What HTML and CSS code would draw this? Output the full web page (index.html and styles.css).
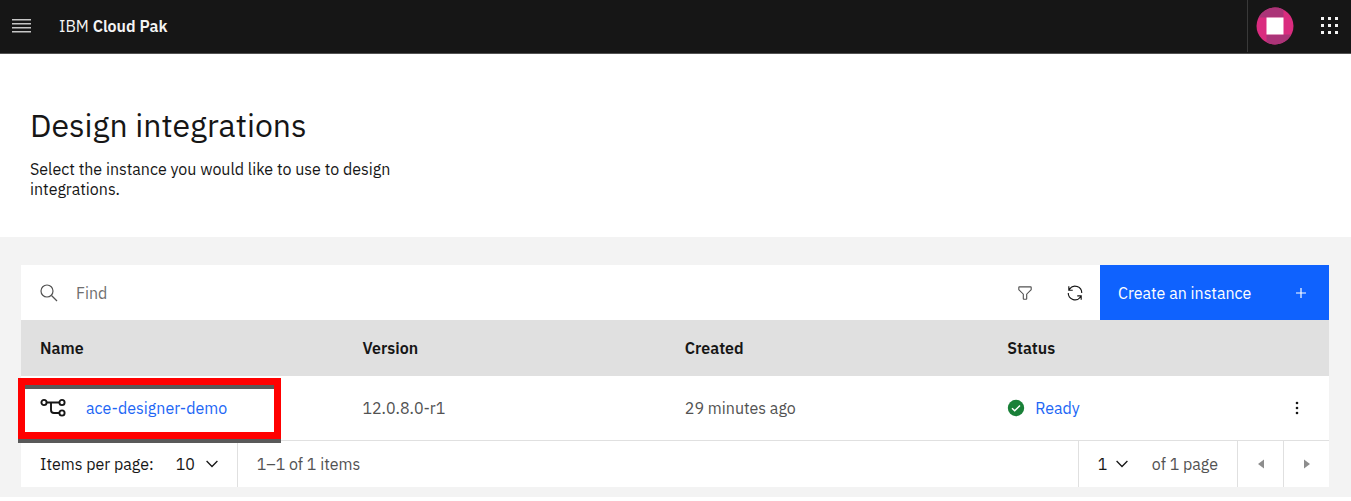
FILE: index.html
```html
<!DOCTYPE html>
<html lang="en">
<head>
<meta charset="utf-8">
<meta name="viewport" content="width=device-width, initial-scale=1">
<title>IBM Cloud Pak</title>
<link rel="stylesheet" href="styles.css">
</head>
<body>
<header class="topbar">
  <button class="icon-button menu-button" type="button" aria-label="Open menu">
    <svg width="20" height="16" viewBox="0 0 20 16" fill="#c6c6c6"><path d="M1 1h19v1H1zM1 5h19v1H1zM1 9h19v1H1zM1 13h19v1H1z"/><path d="M1 2h19v1H1zM1 6h19v1H1zM1 10h19v1H1zM1 14h19v1H1z" opacity=".5"/></svg>
  </button>
  <a class="brand" href="#">IBM <strong>Cloud Pak</strong></a>
  <div class="topbar-actions">
    <button class="icon-button avatar" type="button" aria-label="Profile">
      <svg width="38" height="38" viewBox="0 0 38 38">
        <defs><clipPath id="disc"><circle cx="19" cy="19" r="18.5"/></clipPath></defs>
        <g clip-path="url(#disc)">
          <path fill="#da2c7f" d="M0 0h38v38H0z"/>
          <path fill="#ab3478" d="M0 0h27.500v10.500H0zM10.500 27.500H38V38H10.500z"/>
          <path fill="#fff" d="M10.500 10.500h17v17h-17z"/>
        </g>
      </svg>
    </button>
    <button class="icon-button switcher" type="button" aria-label="App switcher">
      <svg width="20" height="20" viewBox="0 0 20 20" fill="#f4f4f4"><path d="M1 1h3v3H1zM8 1h3v3H8zM15 1h3v3h-3zM1 8h3v3H1zM8 8h3v3H8zM15 8h3v3h-3zM1 15h3v3H1zM8 15h3v3H8zM15 15h3v3h-3z"/></svg>
    </button>
  </div>
</header>

<section class="intro">
  <h1 class="title">Design integrations</h1>
  <p class="lead">Select the instance you would like to use to design integrations.</p>
</section>

<main class="content">
  <div class="toolbar">
    <label class="search">
      <svg width="18" height="18" viewBox="0 0 18 18" fill="none" stroke="#525252" stroke-width="1.200"><circle cx="7" cy="7" r="6"/><path d="M11.500 11.500l5.500 5.500"/></svg>
      <input class="search-input" type="search" placeholder="Find" aria-label="Find">
    </label>
    <button class="icon-button tool" type="button" aria-label="Filter">
      <svg width="18" height="18" viewBox="0 0 32 32" fill="#525252"><path d="M18 28h-4a2 2 0 0 1-2-2v-7.590L4.590 11A2 2 0 0 1 4 9.590V6a2 2 0 0 1 2-2h20a2 2 0 0 1 2 2v3.590a2 2 0 0 1-.590 1.410L20 18.410V26a2 2 0 0 1-2 2zM6 6v3.590l8 8V26h4v-8.410l8-8V6z"/></svg>
    </button>
    <button class="icon-button tool" type="button" aria-label="Refresh">
      <svg width="18" height="18" viewBox="0 0 32 32" fill="#161616"><path d="M12 10H6.780A11 11 0 0 1 27 16h2A13 13 0 0 0 6 7.680V4H4v8h8zM20 22h5.220A11 11 0 0 1 5 16H3a13 13 0 0 0 23 8.320V28h2v-8h-8z"/></svg>
    </button>
    <button class="create" type="button">Create an instance
      <svg width="12" height="12" viewBox="0 0 12 12" fill="none" stroke="#fff" stroke-width="1.200"><path d="M6 1v10M1 6h10"/></svg>
    </button>
  </div>

  <table class="instances">
    <colgroup><col class="col-main"><col class="col-main"><col class="col-main"><col><col class="col-menu"></colgroup>
    <thead>
      <tr><th scope="col">Name</th><th scope="col">Version</th><th scope="col">Created</th><th scope="col">Status</th><th aria-label="Actions"></th></tr>
    </thead>
    <tbody>
      <tr>
        <td class="name-cell">
          <div class="inline">
            <svg width="26" height="20" viewBox="0 0 26 20" fill="none" stroke="#161616" stroke-width="1.900"><circle cx="4" cy="4.500" r="2.600"/><circle cx="22" cy="4.500" r="2.600"/><circle cx="22" cy="15" r="2.600"/><path d="M7 4.500h12M11 4.500v7.500a3 3 0 0 0 3 3h5"/></svg>
            <a class="link" href="#">ace-designer-demo</a>
          </div>
          <span class="highlight"></span>
        </td>
        <td>12.0.8.0-r1</td>
        <td>29 minutes ago</td>
        <td>
          <div class="inline status">
            <svg width="18" height="18" viewBox="0 0 18 18"><circle cx="9" cy="9" r="8.200" fill="#198038"/><path d="M5 9.200l2.700 2.600L13 6.500" fill="none" stroke="#fff" stroke-width="1.500"/></svg>
            <a class="link" href="#">Ready</a>
          </div>
        </td>
        <td class="menu-cell">
          <button class="icon-button" type="button" aria-label="More actions">
            <svg width="4" height="14" viewBox="0 0 4 14" fill="#161616"><circle cx="2" cy="2" r="1.300"/><circle cx="2" cy="7" r="1.300"/><circle cx="2" cy="12" r="1.300"/></svg>
          </button>
        </td>
      </tr>
    </tbody>
  </table>

  <nav class="pagination" aria-label="Pagination">
    <div class="per-page">
      <label for="page-size">Items per page:</label>
      <span class="picker">
        <select id="page-size" class="select select-size"><option>10</option><option>20</option></select>
        <svg class="chevron" width="12" height="8" viewBox="0 0 12 8" fill="none" stroke="#161616" stroke-width="1.300"><path d="M.600 1L6 6.500 11.400 1"/></svg>
      </span>
    </div>
    <div class="range">1–1 of 1 items</div>
    <div class="page-pick">
      <span class="picker">
        <select class="select select-page" aria-label="Page number"><option>1</option></select>
        <svg class="chevron" width="12" height="8" viewBox="0 0 12 8" fill="none" stroke="#161616" stroke-width="1.300"><path d="M.600 1L6 6.500 11.400 1"/></svg>
      </span>
      <span>of 1 page</span>
    </div>
    <button class="icon-button step" type="button" aria-label="Previous page">
      <svg width="6" height="10" viewBox="0 0 6 10" fill="#8d8d8d"><path d="M6 .500v9L0 5z"/></svg>
    </button>
    <button class="icon-button step" type="button" aria-label="Next page">
      <svg width="6" height="10" viewBox="0 0 6 10" fill="#8d8d8d"><path d="M0 .500v9L6 5z"/></svg>
    </button>
  </nav>
</main>
</body>
</html>
```
FILE: styles.css
```css
* { box-sizing: border-box; }

body {
  margin: 0;
  background: #fff;
  color: #161616;
  font: 16px/20px "IBM Plex Sans", "Noto Sans", sans-serif;
}

svg { display: block; flex: none; }

a { text-decoration: none; }

button, input, select { font: inherit; color: inherit; }

.icon-button {
  display: flex;
  align-items: center;
  justify-content: center;
  padding: 0;
  border: 0;
  background: none;
}

.topbar {
  display: flex;
  align-items: stretch;
  height: 54px;
  padding-bottom: 1px;
  background: #161616;
  border-bottom: 1px solid #525252;
}

.menu-button { width: 42px; }

.brand {
  align-self: center;
  padding-left: 17px;
  color: #f4f4f4;
}

.brand strong { font-weight: 600; }

.topbar-actions {
  display: flex;
  margin-left: auto;
  border-left: 1px solid #393939;
}

.avatar { width: 53px; }
.switcher { width: 50px; padding-left: 8px; }

.intro { padding: 50px 30px 38px; }

.title {
  margin: 0 0 13px;
  font-size: 32px;
  font-weight: 400;
  line-height: 42px;
}

.lead {
  max-width: 400px;
  margin: 0;
}

.content {
  padding: 28px 22px 10px 21px;
  background: #f3f3f3;
}

.toolbar {
  display: flex;
  height: 55px;
  background: #fff;
}

.search {
  display: flex;
  flex: 1;
  align-items: center;
  gap: 18px;
  padding-left: 19px;
}

.search-input {
  flex: 1;
  padding: 0;
  border: 0;
  outline: 0;
  background: none;
}

.search-input::placeholder { color: #6f6f6f; opacity: 1; }

.tool { width: 50px; }

.create {
  display: flex;
  align-items: center;
  justify-content: space-between;
  width: 229px;
  padding: 0 22px 0 18px;
  border: 0;
  background: #0f62fe;
  color: #fff;
}

.instances {
  width: 100%;
  table-layout: fixed;
  border-collapse: collapse;
  background: #fff;
}

.col-main { width: 24.65%; }
.col-menu { width: 64px; }

.instances th {
  height: 56px;
  padding: 0 19px;
  background: #e0e0e0;
  font-weight: 600;
  text-align: left;
}

.instances td {
  height: 64px;
  padding: 0 19px;
  border-bottom: 1px solid #e0e0e0;
  color: #525252;
}

.name-cell { position: relative; }

.inline {
  display: flex;
  align-items: center;
  gap: 20px;
}

.status { gap: 10px; }

.link { color: #2166f5; }

.highlight {
  position: absolute;
  top: 2px;
  left: -3px;
  width: 263px;
  height: 61px;
  border: 7px solid #f00;
  box-shadow: 0 4px 0 #595959, inset 0 4px 0 #595959;
  pointer-events: none;
}

.instances .menu-cell { padding: 0; }
.menu-cell .icon-button { width: 100%; height: 40px; }

.pagination {
  display: flex;
  height: 46px;
  background: #fff;
  color: #525252;
}

.per-page, .range, .page-pick {
  display: flex;
  align-items: center;
  padding: 0 19px;
}

.per-page {
  gap: 22px;
  border-right: 1px solid #e0e0e0;
  color: #161616;
}

.range { flex: 1; }

.page-pick {
  gap: 24px;
  border-left: 1px solid #e0e0e0;
}

.picker {
  position: relative;
  display: flex;
  align-items: center;
  color: #161616;
}

.select {
  padding: 0;
  border: 0;
  outline: 0;
  background: none;
  appearance: none;
}

.select-size { width: 42px; }
.select-page { width: 30px; }

.chevron {
  position: absolute;
  right: 0;
  pointer-events: none;
}

.step {
  width: 46px;
  border-left: 1px solid #e0e0e0;
}
```
